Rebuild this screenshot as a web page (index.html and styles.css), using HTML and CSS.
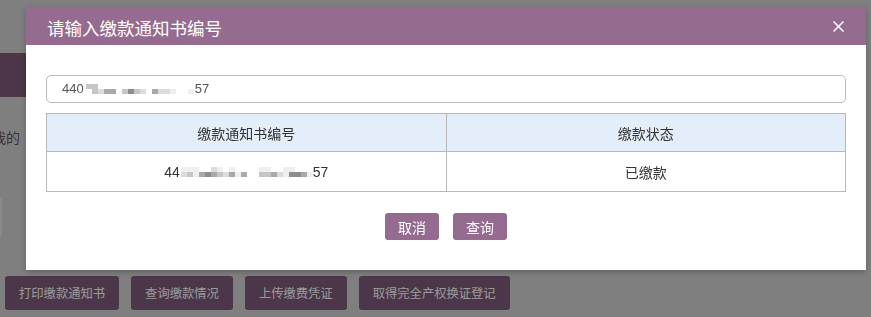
FILE: index.html
```html
<!DOCTYPE html>
<html lang="zh-CN">
  <head>
    <meta charset="UTF-8" />
    <meta name="viewport" content="width=device-width, initial-scale=1.0" />
    <title>缴款通知书查询</title>
    <link rel="stylesheet" href="styles.css">
  </head>
  <body>
    <!-- Page underneath the dialog -->
    <div class="page">
      <div class="nav"></div>
      <div class="form-row">
        <div class="label"><span>请输入我的</span></div>
      </div>
      <div class="side-box"></div>
      <div class="actions">
        <button class="page-btn">打印缴款通知书</button>
        <button class="page-btn">查询缴款情况</button>
        <button class="page-btn">上传缴费凭证</button>
        <button class="page-btn">取得完全产权换证登记</button>
      </div>
    </div>

    <!-- Dialog -->
    <div class="mask"></div>
    <div class="dialog">
      <div class="dialog-header">
        <span class="dialog-title">请输入缴款通知书编号</span>
        <button class="close" aria-label="关闭">
          <svg width="11" height="11" viewBox="0 0 11 11">
            <path d="M0.5 0.5 L10.5 10.5 M10.5 0.5 L0.5 10.5" stroke="#fff" stroke-width="1.5" fill="none" />
          </svg>
        </button>
      </div>
      <div class="dialog-body">
        <div class="search-input">
          440<span class="mosaic mosaic-input">
            <i class="m3"></i><i class="m3"></i><i></i><i></i><i></i><i></i><i></i><i></i><i></i><i></i><i></i><i></i><i></i><i></i><i></i><i></i><i></i><i></i>
            <i></i><i class="m3"></i><i class="m2"></i><i class="m4"></i><i class="m4"></i><i></i><i class="m3"></i><i class="m5"></i><i class="m3"></i><i class="m2"></i><i></i><i class="m4"></i><i class="m2"></i><i class="m2"></i><i class="m1"></i><i></i><i></i><i class="m1"></i>
          </span>57
        </div>

        <table class="result">
          <thead>
            <tr>
              <th>缴款通知书编号</th>
              <th>缴款状态</th>
            </tr>
          </thead>
          <tbody>
            <tr>
              <td>44<span class="mosaic mosaic-cell">
                <i class="m1"></i><i class="m1"></i><i class="m1"></i><i></i><i></i><i class="m2"></i><i class="m1"></i><i></i><i class="m1"></i><i></i><i></i><i></i><i></i><i class="m1"></i><i class="m1"></i><i></i><i></i><i class="m1"></i><i class="m1"></i><i></i><i></i><i></i>
                <i class="m2"></i><i class="m3"></i><i class="m1"></i><i class="m4"></i><i class="m5"></i><i class="m4"></i><i class="m3"></i><i class="m2"></i><i class="m4"></i><i class="m1"></i><i class="m4"></i><i></i><i></i><i class="m3"></i><i class="m3"></i><i class="m4"></i><i class="m2"></i><i class="m1"></i><i class="m5"></i><i class="m5"></i><i class="m4"></i><i class="m1"></i>
              </span>57</td>
              <td>已缴款</td>
            </tr>
          </tbody>
        </table>

        <div class="dialog-footer">
          <button class="btn">取消</button>
          <button class="btn">查询</button>
        </div>
      </div>
    </div>
  </body>
</html>
```

FILE: styles.css
```css
/* Global Styles */
* {
  margin: 0;
  padding: 0;
  box-sizing: border-box;
}

body {
  font-family: "Liberation Sans", "Noto Sans CJK SC", sans-serif;
  background: #d4d4d4;
  color: #333;
  overflow: hidden;
}

button {
  font-family: inherit;
  border: none;
  cursor: pointer;
}

/* Page underneath */
.page {
  height: 317px;
  padding-top: 53px;
}

.nav {
  width: 320px;
  height: 44px;
  background-color: #7f5a79;
}

.form-row {
  margin-top: 31px;
  height: 20px;
}

.label {
  width: 20px;
  display: flex;
  justify-content: flex-end;
  font-size: 14px;
  line-height: 20px;
  color: #6a4f66;
  white-space: nowrap;
}

.side-box {
  width: 2px;
  height: 39px;
  margin-top: 49px;
  background-color: #e6e6e6;
}

.actions {
  display: flex;
  gap: 12px;
  margin-top: 40px;
  padding-left: 5px;
}

.page-btn {
  height: 34px;
  padding: 0 14px;
  background-color: #7f5a7a;
  color: #fff;
  font-size: 12.3px;
  border-radius: 3px;
}

/* Mask */
.mask {
  position: fixed;
  inset: 0;
  background: rgba(0, 0, 0, 0.4);
}

/* Dialog */
.dialog {
  position: fixed;
  top: 7px;
  left: 26px;
  width: 840px;
  background-color: #fff;
  box-shadow: 0 2px 6px rgba(0, 0, 0, 0.25);
}

.dialog-header {
  display: flex;
  align-items: center;
  justify-content: space-between;
  height: 38px;
  padding: 6px 22px 0 21px;
  background-color: #966b90;
}

.dialog-title {
  color: #fff;
  font-size: 17.5px;
  line-height: 24px;
}

.close {
  display: flex;
  background: none;
  margin-top: -6px;
}

.dialog-body {
  padding: 30px 20px 30px;
}

.search-input {
  height: 28px;
  border: 1px solid #b9b9b9;
  border-radius: 5px;
  padding-left: 15px;
  font-size: 13px;
  line-height: 26px;
  color: #555;
}

/* Mosaic over hidden digits */
.mosaic {
  display: inline-grid;
  grid-auto-rows: 5px;
  vertical-align: middle;
}

.mosaic-input {
  grid-template-columns: repeat(18, 6px);
  margin: -2px 1px 0 2px;
}

.mosaic-cell {
  grid-template-columns: repeat(22, 6px);
  margin: -2px 0 0 1px;
}

.mosaic i {
  display: block;
}

.mosaic .m1 { background-color: #efefef; }
.mosaic .m2 { background-color: #dcdcdc; }
.mosaic .m3 { background-color: #c6c6c6; }
.mosaic .m4 { background-color: #a9a9a9; }
.mosaic .m5 { background-color: #8d8d8d; }

/* Result table */
.result {
  width: 100%;
  margin-top: 10px;
  border-collapse: collapse;
  font-size: 14px;
  color: #333;
}

.result th,
.result td {
  border: 1px solid #b8b8b8;
  text-align: center;
  font-weight: normal;
  width: 50%;
}

.result th {
  height: 38px;
  background-color: #e4eefa;
}

.result td {
  height: 40px;
}

/* Footer buttons */
.dialog-footer {
  display: flex;
  justify-content: center;
  gap: 14px;
  margin-top: 21px;
}

.btn {
  height: 27px;
  padding: 0 13px;
  background-color: #966b90;
  color: #fff;
  font-size: 14px;
  border-radius: 3px;
}
```
